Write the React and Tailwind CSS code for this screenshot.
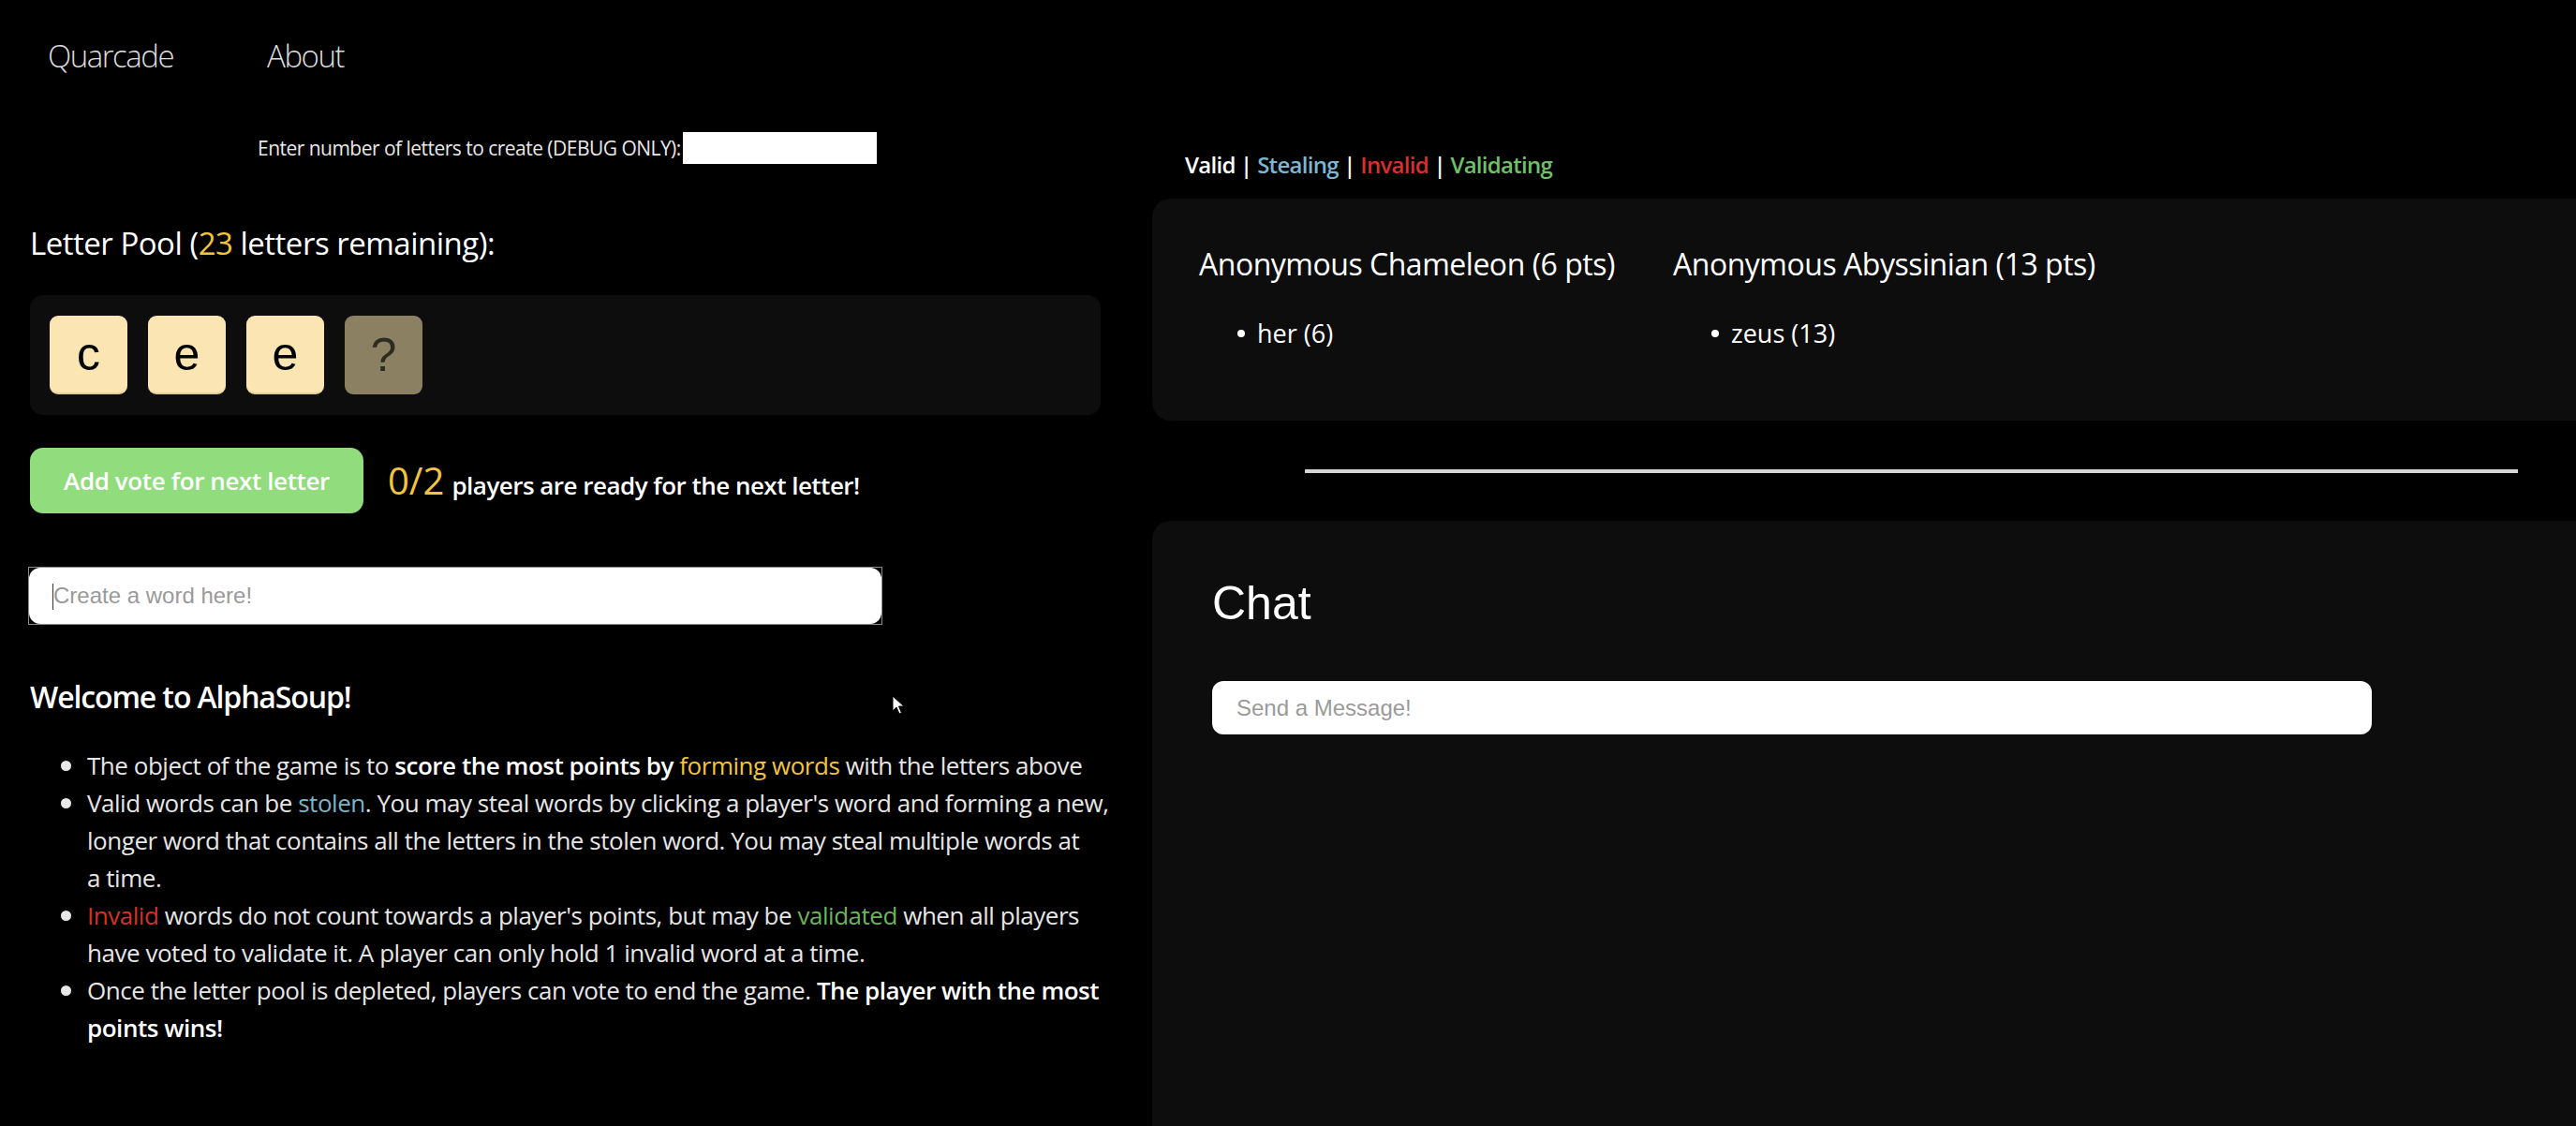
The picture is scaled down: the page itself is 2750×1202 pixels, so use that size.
import React from "react";

// letter tiles in the pool; the last one is still hidden
const pool = [
  { letter: "c" },
  { letter: "e" },
  { letter: "e" },
  { letter: "?", hidden: true },
];

const players = [
  { name: "Anonymous Chameleon", points: 6, words: [{ word: "her", points: 6 }] },
  { name: "Anonymous Abyssinian", points: 13, words: [{ word: "zeus", points: 13 }] },
];

function Tile({ letter, hidden }) {
  return (
    <div
      className={`w-[83px] h-[84px] rounded-[9px] flex items-center justify-center font-['Liberation_Sans',Arial,sans-serif] text-[50px] leading-none ${
        hidden ? "bg-[#8b8162] text-[#2e2b22]" : "bg-[#fbe6b3] text-black border-b-2 border-[#e6cf95]"
      }`}
    >
      {letter}
    </div>
  );
}

function Bullet({ children }) {
  return (
    <li className="flex">
      <div className="h-[40px] w-[28px] shrink-0 flex items-center">
        <span className="w-[11px] h-[11px] rounded-full bg-[#e8e8e8]" />
      </div>
      <div>{children}</div>
    </li>
  );
}

export default function App() {
  return (
    <div className="relative min-h-screen bg-black text-white font-['Open_Sans',sans-serif] overflow-hidden">
      <nav className="flex gap-[100px] pl-[51px] pt-[35px] text-[33px] leading-[50px] font-light tracking-[-0.045em] text-[#dcdcdc]">
        <a>Quarcade</a>
        <a>About</a>
      </nav>

      <div className="flex">
        {/* game column */}
        <div className="w-[1229px] shrink-0 pl-[32px] pr-[54px] pb-[60px]">
          <div className="mt-[56px] flex items-center pl-[243px] text-[21px] leading-[34px] tracking-[-0.025em] text-[#e8e8e8]">
            <span>Enter number of letters to create (DEBUG ONLY):</span>
            <input className="ml-[2px] w-[207px] h-[34px] bg-white outline-none" />
          </div>

          <h2 className="mt-[65px] text-[33px] leading-[40px] font-medium tracking-[-0.015em]">
            Letter Pool (<span className="text-[#f2c53d]">23</span> letters remaining):
          </h2>

          <div className="mt-[35px] h-[128px] rounded-[14px] bg-[#0d0d0d] flex items-center gap-[22px] px-[21px]">
            {pool.map((t, i) => (
              <Tile key={i} letter={t.letter} hidden={t.hidden} />
            ))}
          </div>

          <div className="mt-[35px] flex items-center gap-[26px]">
            <button className="w-[356px] h-[70px] rounded-[14px] bg-[#91dc7c] text-[26px] font-semibold tracking-[-0.015em] text-white">
              Add vote for next letter
            </button>
            <p className="flex items-baseline gap-[8px] font-semibold text-[26px] tracking-[-0.02em]">
              <span className="text-[#f2c53d] text-[40px] font-normal tracking-normal">0/2</span>
              players are ready for the next letter!
            </p>
          </div>

          <div className="relative mt-[57px] w-[912px] h-[62px] border border-[#8c8c8c] -ml-[2px]">
            <input
              placeholder="Create a word here!"
              className="w-full h-full rounded-[12px] bg-white pl-[26px] text-[24px] font-['Liberation_Sans',Arial,sans-serif] text-black placeholder:text-[#9a9a9a] outline-none"
            />
            <span className="absolute left-[25px] top-[17px] w-[1px] h-[28px] bg-[#333]" />
          </div>

          <h2 className="mt-[57px] text-[32px] leading-[40px] font-semibold tracking-[-0.035em]">Welcome to AlphaSoup!</h2>

          <ul className="mt-[33px] ml-[33px] text-[26px] leading-[40px] tracking-[-0.018em] text-[#e6e6e6] whitespace-nowrap">
            <Bullet>
              The object of the game is to <b className="font-semibold text-white">score the most points by</b>{" "}
              <span className="text-[#f2c53d]">forming words</span> with the letters above
            </Bullet>
            <Bullet>
              Valid words can be <span className="text-[#7db4c6]">stolen</span>. You may steal words by clicking a
              player's word and forming a new,
              <br />
              longer word that contains all the letters in the stolen word. You may steal multiple words at
              <br />a time.
            </Bullet>
            <Bullet>
              <span className="text-[#d3322b]">Invalid</span> words do not count towards a player's points, but may be{" "}
              <span className="text-[#6db35c]">validated</span> when all players
              <br />
              have voted to validate it. A player can only hold 1 invalid word at a time.
            </Bullet>
            <Bullet>
              Once the letter pool is depleted, players can vote to end the game.{" "}
              <b className="font-semibold text-white">The player with the most</b>
              <br />
              <b className="font-semibold text-white">points wins!</b>
            </Bullet>
          </ul>
        </div>

        {/* players + chat column */}
        <div className="flex-1 min-w-0">
          <div className="mt-[76px] pl-[36px] text-[24px] leading-[30px] font-semibold tracking-[-0.03em]">
            <span className="text-white">Valid</span> | <span className="text-[#7bb7d3]">Stealing</span> |{" "}
            <span className="text-[#d8302a]">Invalid</span> | <span className="text-[#6fc067]">Validating</span>
          </div>

          <div className="mt-[21px] ml-px h-[237px] rounded-l-[20px] bg-[#0d0d0d] pl-[50px] pt-[50px] grid grid-cols-[506px_auto] content-start">
            {players.map((p) => (
              <div key={p.name}>
                <h3 className="text-[32px] leading-[40px] font-medium tracking-[-0.015em] whitespace-nowrap">
                  {p.name} ({p.points} pts)
                </h3>
                <ul className="mt-[36px] text-[27px] leading-[36px]">
                  {p.words.map((w) => (
                    <li key={w.word} className="flex items-center gap-[13px] pl-[41px]">
                      <span className="w-[8px] h-[8px] rounded-full bg-white" />
                      {w.word} ({w.points})
                    </li>
                  ))}
                </ul>
              </div>
            ))}
          </div>

          <hr className="mt-[52px] ml-[164px] mr-[62px] border-0 h-[4px] bg-[#d6d6d6]" />

          <div className="mt-[51px] ml-px min-h-[646px] rounded-tl-[20px] bg-[#0d0d0d] pl-[64px] pt-[58px]">
            <h2 className="text-[50px] leading-[60px] font-['Liberation_Sans',Arial,sans-serif]">Chat</h2>
            <input
              placeholder="Send a Message!"
              className="mt-[53px] w-[1238px] h-[57px] rounded-[12px] bg-white pl-[26px] text-[24px] font-['Liberation_Sans',Arial,sans-serif] text-black placeholder:text-[#9a9a9a] outline-none"
            />
          </div>
        </div>
      </div>

      {/* mouse pointer captured in the screenshot */}
      <svg className="absolute left-[952px] top-[742px]" width="14" height="22" viewBox="0 0 14 22">
        <path d="M1 1 L1 17 L5 13 L8 20 L10.5 19 L7.5 12 L13 12 Z" fill="#fff" stroke="#000" strokeWidth="1" />
      </svg>
    </div>
  );
}
